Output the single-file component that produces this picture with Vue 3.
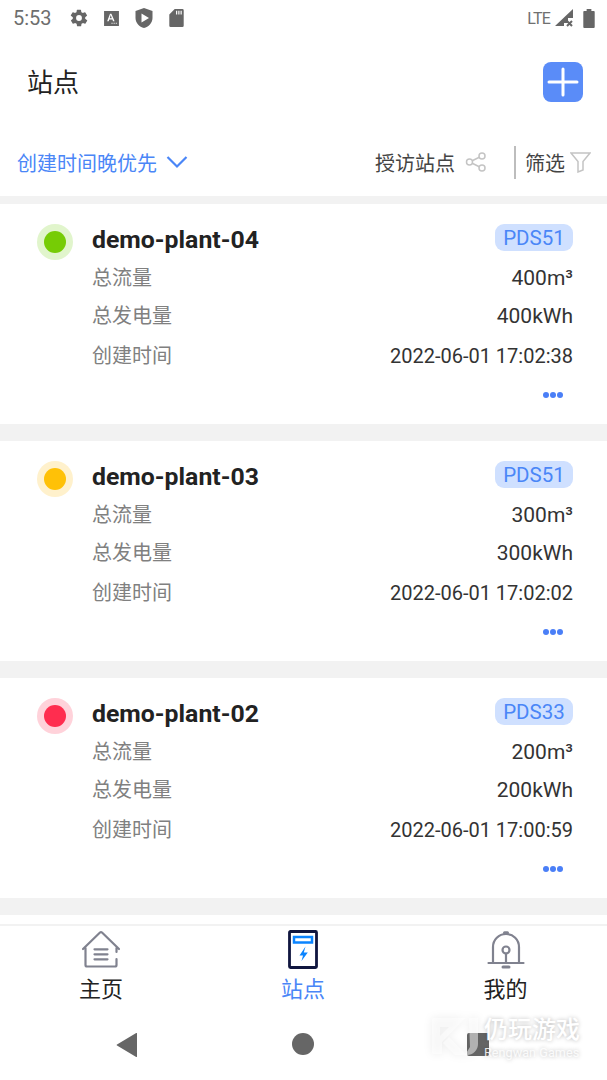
<template>
  <div class="page">
    <div class="status-bar">
      <span class="clock">5:53</span>
      <svg class="st-icon gear" viewBox="0 0 24 24"><path d="M19.4 13a7.6 7.6 0 0 0 0-2l2.1-1.6a.5.5 0 0 0 .1-.7l-2-3.4a.5.5 0 0 0-.6-.2l-2.5 1a7.3 7.3 0 0 0-1.7-1l-.4-2.7a.5.5 0 0 0-.5-.4h-4a.5.5 0 0 0-.5.4l-.4 2.7a7.3 7.3 0 0 0-1.7 1l-2.5-1a.5.5 0 0 0-.6.2l-2 3.4a.5.5 0 0 0 .1.7L4.6 11a7.6 7.6 0 0 0 0 2l-2.1 1.6a.5.5 0 0 0-.1.7l2 3.4c.1.2.4.3.6.2l2.5-1c.5.4 1.1.7 1.7 1l.4 2.7c0 .2.3.4.5.4h4c.2 0 .5-.2.5-.4l.4-2.7c.6-.3 1.2-.6 1.7-1l2.5 1c.2.1.5 0 .6-.2l2-3.4a.5.5 0 0 0-.1-.7zM12 15.5a3.5 3.5 0 1 1 0-7 3.5 3.5 0 0 1 0 7z" /></svg>
      <svg class="st-icon font-box" viewBox="0 0 16 16"><path fill-rule="evenodd" d="M1 1h14v14H1zM6.6 3.5 3.9 10.5h1.5l.5-1.5h3l.5 1.5h1.5L7.9 3.5zM6.3 7.8l1-3 1 3zM8 12h1v1H8zm2 0h1v1h-1zm2 0h1v1h-1z" /></svg>
      <svg class="st-icon shield" viewBox="0 0 18 20"><path fill-rule="evenodd" d="M9 0 17.500 3V10C17.500 15 13.500 18.800 9 20 4.500 18.800.5 15 .5 10V3zM6.500 5.500v9l7.500-4.500z" /></svg>
      <svg class="st-icon card-icon" viewBox="0 0 16 20"><path fill-rule="evenodd" d="M6 0h8.500A1.500 1.500 0 0 1 16 1.500v17a1.500 1.500 0 0 1-1.500 1.500h-13A1.500 1.500 0 0 1 0 18.500V6zM7.500 2v4h1.300V2zm2.500 0v4h1.300V2zm2.500 0v4h1.300V2z" /></svg>
      <span class="spacer"></span>
      <span class="lte">LTE</span>
      <svg class="signal" viewBox="0 0 20 20"><path d="M19 1v9h-5v5H10v3H1z" /><path d="M13 13l5 5M18 13l-5 5" class="signal-x" /></svg>
      <svg class="battery" viewBox="0 0 12 20"><path d="M3.500 0h5v2H11a1 1 0 0 1 1 1v16a1 1 0 0 1-1 1H1a1 1 0 0 1-1-1V3a1 1 0 0 1 1-1h2.500z" /></svg>
    </div>

    <header class="title-bar">
      <h1>站点</h1>
      <button class="add-btn">
        <svg viewBox="0 0 40 40"><path d="M20 7v26M6 20h28" /></svg>
      </button>
    </header>

    <div class="filter-bar">
      <div class="sort">
        <span>创建时间晚优先</span>
        <svg viewBox="0 0 22 14"><path d="M1.500 2 11 11.500 20.500 2" /></svg>
      </div>
      <div class="actions">
        <span>授访站点</span>
        <svg class="share" viewBox="0 0 22 20"><circle cx="17" cy="4" r="3" /><circle cx="4.500" cy="10" r="3" /><circle cx="17" cy="16" r="3" /><path d="M7.200 8.700 14.300 5.300M7.200 11.300 14.300 14.700" /></svg>
        <i class="divider"></i>
        <span>筛选</span>
        <svg class="funnel" viewBox="0 0 21 21"><path d="M1 1h19l-7 8.500V18l-5 2V9.500z" /></svg>
      </div>
    </div>

    <div class="list">
      <section v-for="site in sites" :key="site.name" class="card">
        <span class="status" :class="site.status"><i></i></span>
        <div class="card-body">
          <div class="head-row">
            <span class="name">{{ site.name }}</span>
            <span class="tag">{{ site.model }}</span>
          </div>
          <div class="row row-flow"><span class="label">总流量</span><span class="value big">{{ site.flow }}</span></div>
          <div class="row row-power"><span class="label">总发电量</span><span class="value big">{{ site.power }}</span></div>
          <div class="row row-time"><span class="label">创建时间</span><span class="value">{{ site.time }}</span></div>
          <div class="more"><i></i><i></i><i></i></div>
        </div>
      </section>
      <section class="card"></section>
    </div>

    <nav class="tabs">
      <div class="tab">
        <svg viewBox="0 0 40 40">
          <path class="grey" d="M2 19 19 2.500a1.500 1.500 0 0 1 2 0L38 19M4.500 18v17a1.500 1.500 0 0 0 1.500 1.500h28a1.500 1.500 0 0 0 1.500-1.500v-6M35.500 18v4" />
          <path class="grey" d="M13.500 19.300h13M13.500 24.300h13M13.500 29.300h13" />
        </svg>
        <span>主页</span>
      </div>
      <div class="tab active">
        <svg viewBox="0 0 40 40">
          <rect x="6.500" y="1.500" width="27" height="36" rx="1" class="navy" />
          <rect x="11" y="7" width="18" height="5.500" class="blue" />
          <path class="bolt" d="M22.500 16.500 16.500 25.500H20L18.500 31 24.800 22.500H20.800z" />
        </svg>
        <span>站点</span>
      </div>
      <div class="tab">
        <svg viewBox="0 0 40 40">
          <path class="grey" d="M7 33V17a13 13 0 0 1 26 0v16M2.500 33h35" />
          <circle class="grey" cx="20" cy="20" r="3.500" />
          <path class="grey" d="M20 23.500V33" />
          <path class="grey thick" d="M18.500 2.800h3M17 37h6" />
        </svg>
        <span>我的</span>
      </div>
    </nav>

    <div class="sys-nav">
      <svg class="back" viewBox="0 0 22 24"><path d="M21 .5v23a.5.5 0 0 1-.8.4L1 12.500a.6.6 0 0 1 0-1L20.200.100a.5.5 0 0 1 .8.4z" /></svg>
      <i class="home"></i>
      <i class="recent"></i>
    </div>

    <div class="watermark">
      <svg viewBox="0 0 50 40">
        <path d="M1 3a2 2 0 0 1 2-2H34L11 25V37H3a2 2 0 0 1-2-2zM9 10V19L18 10z" fill-rule="evenodd" />
        <path d="M18 20 35 38H24L12 26z" />
        <path d="M38 1h9V27a11 11 0 0 1-11 11h-2l5-8z" />
      </svg>
      <div class="wm-text">
        <b>仍玩游戏</b>
        <span>Rengwan Games</span>
      </div>
    </div>
  </div>
</template>

<script setup>
const sites = [
  { name: 'demo-plant-04', model: 'PDS51', flow: '400m³', power: '400kWh', time: '2022-06-01 17:02:38', status: 'green' },
  { name: 'demo-plant-03', model: 'PDS51', flow: '300m³', power: '300kWh', time: '2022-06-01 17:02:02', status: 'yellow' },
  { name: 'demo-plant-02', model: 'PDS33', flow: '200m³', power: '200kWh', time: '2022-06-01 17:00:59', status: 'red' }
]
</script>

<style>
html,
body {
  margin: 0;
  background: #fff;
}
</style>

<style scoped>
.page {
  position: relative;
  width: 607px;
  height: 1080px;
  overflow: hidden;
  display: flex;
  flex-direction: column;
  background: #fff;
  font-family: Roboto, "Noto Sans CJK SC", sans-serif;
  color: #333;
}

.status-bar {
  height: 36px;
  flex-shrink: 0;
  display: flex;
  align-items: center;
  padding: 0 12px 0 13px;
  color: #6a6a6a;
  box-sizing: border-box;
}
.clock {
  font-size: 20px;
  width: 56px;
  color: #6e6e6e;
}
.st-icon {
  fill: #666;
  flex-shrink: 0;
}
.gear {
  width: 20px;
  height: 20px;
}
.font-box {
  width: 17px;
  height: 17px;
  margin-left: 14px;
}
.shield {
  width: 18px;
  height: 20px;
  margin-left: 15px;
}
.card-icon {
  width: 15px;
  height: 18px;
  margin-left: 16px;
}
.spacer {
  flex: 1;
}
.lte {
  font-size: 16px;
  letter-spacing: -0.8px;
  color: #707070;
}
.signal {
  width: 20px;
  height: 20px;
  margin-left: 4px;
  fill: #666;
}
.signal-x {
  stroke: #666;
  stroke-width: 2;
  fill: none;
}
.battery {
  width: 12px;
  height: 19px;
  margin-left: 9px;
  fill: #666;
}

.title-bar {
  height: 92px;
  flex-shrink: 0;
  display: flex;
  align-items: center;
  justify-content: space-between;
  padding: 0 24px 0 27px;
  box-sizing: border-box;
}
.title-bar h1 {
  margin: 0;
  padding-bottom: 4px;
  font-size: 26px;
  font-weight: 400;
  color: #222;
}
.add-btn {
  width: 40px;
  height: 40px;
  padding: 0;
  border: 0;
  border-radius: 8px;
  background: #5a8cf8;
  display: block;
}
.add-btn svg {
  display: block;
  width: 40px;
  height: 40px;
  fill: none;
  stroke: #fff;
  stroke-width: 3;
  stroke-linecap: round;
}

.filter-bar {
  height: 68px;
  flex-shrink: 0;
  display: flex;
  align-items: center;
  justify-content: space-between;
  padding: 0 16px 0 17px;
  box-sizing: border-box;
  font-size: 20px;
}
.sort {
  display: flex;
  align-items: center;
  gap: 9px;
  color: #4a86f7;
}
.sort svg {
  width: 22px;
  height: 14px;
  fill: none;
  stroke: #4a86f7;
  stroke-width: 2.200;
}
.actions {
  display: flex;
  align-items: center;
  color: #444;
}
.share {
  width: 22px;
  height: 20px;
  margin-left: 10px;
  fill: none;
  stroke: #c4c4c4;
  stroke-width: 1.500;
}
.divider {
  width: 2px;
  height: 33px;
  background: #bdbdbd;
  margin: 0 9px 0 27px;
}
.funnel {
  width: 21px;
  height: 21px;
  margin-left: 5px;
  fill: none;
  stroke: #c4c4c4;
  stroke-width: 1.500;
}

.list {
  flex: 1;
  min-height: 0;
  overflow: hidden;
  background: #f2f2f2;
  padding-top: 8px;
}
.card {
  height: 220px;
  margin-bottom: 17px;
  background: #fff;
  display: flex;
  padding: 20px 34px 0 37px;
  box-sizing: border-box;
}
.status {
  width: 36px;
  height: 36px;
  border-radius: 50%;
  display: flex;
  align-items: center;
  justify-content: center;
  flex-shrink: 0;
  margin-right: 19px;
}
.status i {
  width: 22px;
  height: 22px;
  border-radius: 50%;
}
.green {
  background: #e1f5cc;
}
.green i {
  background: #76cc05;
}
.yellow {
  background: #fff1cc;
}
.yellow i {
  background: #ffc107;
}
.red {
  background: #ffd2da;
}
.red i {
  background: #ff2d4f;
}
.card-body {
  flex: 1;
  min-width: 0;
}
.head-row {
  height: 27px;
  display: flex;
  align-items: center;
  justify-content: space-between;
}
.name {
  font-size: 24.800px;
  font-weight: 700;
  color: #222;
  padding-top: 4px;
}
.tag {
  width: 78px;
  height: 27px;
  border-radius: 9px;
  background: #cfe0ff;
  color: #4a86f7;
  font-size: 20.500px;
  line-height: 29px;
  text-align: center;
}
.row {
  display: flex;
  justify-content: space-between;
  align-items: center;
  font-size: 20px;
  height: 30px;
}
.row-flow {
  margin-top: 11px;
}
.row-power {
  margin-top: 8px;
}
.row-time {
  margin-top: 10px;
}
.label {
  color: #808080;
  padding-bottom: 2px;
}
.value {
  color: #333;
  padding-top: 2px;
}
.value.big {
  font-size: 21px;
}
.more {
  display: flex;
  justify-content: flex-end;
  gap: 1px;
  margin-top: 22px;
  padding-right: 10px;
}
.more i {
  width: 6px;
  height: 6px;
  border-radius: 50%;
  background: #4a7ff7;
}

.tabs {
  position: absolute;
  left: 0;
  right: 0;
  top: 924px;
  height: 86px;
  background: #fff;
  border-top: 2px solid #f2f2f2;
  box-sizing: border-box;
  display: grid;
  grid-template-columns: 202px 202px 203px;
}
.tab {
  display: flex;
  flex-direction: column;
  align-items: center;
  font-size: 22px;
  color: #222;
  padding-top: 4px;
}
.tab svg {
  width: 40px;
  height: 40px;
  flex-shrink: 0;
}
.tab span {
  line-height: 32px;
  margin-top: 4px;
}
.tab.active span {
  color: #4a86f7;
}
.grey {
  fill: none;
  stroke: #80828f;
  stroke-width: 2.200;
  stroke-linecap: round;
  stroke-linejoin: round;
}
.thick {
  stroke-width: 3;
}
.navy {
  fill: #fff;
  stroke: #10163f;
  stroke-width: 2.800;
}
.blue {
  fill: none;
  stroke: #0a84ff;
  stroke-width: 2.500;
}
.bolt {
  fill: #0a84ff;
}

.sys-nav {
  position: absolute;
  left: 0;
  right: 0;
  top: 1010px;
  height: 70px;
  background: #fff;
}
.back {
  position: absolute;
  left: 116px;
  top: 23px;
  width: 22px;
  height: 24px;
  fill: #666;
}
.home {
  position: absolute;
  left: 292px;
  top: 23px;
  width: 22px;
  height: 22px;
  border-radius: 50%;
  background: #666;
}
.recent {
  position: absolute;
  left: 467px;
  top: 23px;
  width: 22px;
  height: 23px;
  border-radius: 2px;
  background: #666;
}

.watermark {
  position: absolute;
  left: 431px;
  top: 1016px;
  display: flex;
  gap: 3px;
  color: #fff;
  text-shadow: 0 0 4px rgba(0, 0, 0, 0.28);
}
.watermark svg {
  width: 50px;
  height: 40px;
  margin-top: 1px;
  fill: rgba(255, 255, 255, 0.5);
  filter: drop-shadow(0 0 4px rgba(0, 0, 0, 0.14));
}
.wm-text {
  display: flex;
  flex-direction: column;
}
.wm-text b {
  font-size: 24px;
  line-height: 28px;
  font-weight: 500;
}
.wm-text span {
  font-size: 12.700px;
  line-height: 16px;
  margin-top: 1px;
  color: rgba(255, 255, 255, 0.85);
}
</style>
